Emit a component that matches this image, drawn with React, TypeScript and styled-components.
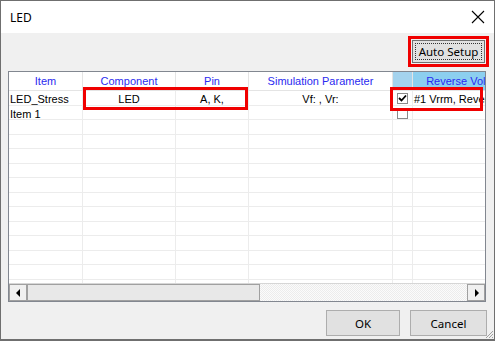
import styled, { createGlobalStyle } from "styled-components";

const GlobalStyle = createGlobalStyle`
  html, body {
    margin: 0;
    padding: 0;
    background: #f0f0f0;
  }
  * {
    box-sizing: border-box;
  }
`;

const COLUMNS = [
  { title: "Item", width: 74, align: "left" },
  { title: "Component", width: 93, align: "center" },
  { title: "Pin", width: 73, align: "center" },
  { title: "Simulation Parameter", width: 144, align: "center" },
  { title: "", width: 20, align: "center", check: true },
  { title: "Reverse Voltage", width: 108, align: "left", accent: true },
];

const ROWS = [
  ["LED_Stress", "LED", "A, K,", "Vf: , Vr:", "checked", "#1 Vrrm, Reverse Voltage"],
  ["Item 1", "", "", "", "empty", ""],
];

const ROW_COUNT = 14;

const App = () => {
  const rows = Array.from({ length: ROW_COUNT }, (_, i) => ROWS[i] ?? ["", "", "", "", "", ""]);

  return (
    <>
      <GlobalStyle />
      <Dialog>
        <TitleBar>
          <Title>LED</Title>
          <CloseIcon width={14} height={14} viewBox="0 0 14 14">
            <path d="M1 1 L13 13 M13 1 L1 13" stroke="#000" strokeWidth="1.1" />
          </CloseIcon>
        </TitleBar>
        <Body>
          <Toolbar>
            <Mark>
              <Button width={73} height={23} focused>
                Auto Setup
              </Button>
            </Mark>
          </Toolbar>
          <Grid>
            <Table>
              <HeaderRow>
                {COLUMNS.map((col, i) => (
                  <HeaderCell key={i} w={col.width} tone={col.accent ? "accent" : col.check ? "check" : "plain"}>
                    {col.title}
                  </HeaderCell>
                ))}
              </HeaderRow>
              {rows.map((row, r) => (
                <Row key={r}>
                  {COLUMNS.map((col, c) => (
                    <Cell key={c} w={col.width} align={col.align}>
                      {col.check ? (
                        row[c] ? <CheckBox>{row[c] === "checked" && <CheckMark />}</CheckBox> : null
                      ) : (
                        row[c]
                      )}
                    </Cell>
                  ))}
                </Row>
              ))}
            </Table>
            <RowMark style={{ left: 74, top: 15, width: 165, height: 23 }} />
            <RowMark style={{ left: 381, top: 15, width: 93, height: 24 }} />
            <ScrollBar>
              <ArrowButton>
                <svg width={5} height={8} viewBox="0 0 5 8">
                  <path d="M4 0 L0 4 L4 8 Z" fill="#000" />
                </svg>
              </ArrowButton>
              <Thumb />
              <Track />
              <ArrowButton>
                <svg width={5} height={8} viewBox="0 0 5 8">
                  <path d="M1 0 L5 4 L1 8 Z" fill="#000" />
                </svg>
              </ArrowButton>
            </ScrollBar>
          </Grid>
          <Footer>
            <Button width={74} height={26}>OK</Button>
            <Button width={77} height={26}>Cancel</Button>
          </Footer>
          <Grip width={10} height={10} viewBox="0 0 10 10">
            <path d="M9 2 L2 9 M9 5 L5 9 M9 8 L8 9" stroke="#a0a0a0" strokeWidth="1" />
          </Grip>
        </Body>
      </Dialog>
    </>
  );
};

const Dialog = styled.div`
  width: 495px;
  height: 341px;
  border: 1px solid #6f6f6f;
  border-bottom-width: 2px;
  display: flex;
  flex-direction: column;
  background: #f0f0f0;
  font-family: "Liberation Sans", Arial, sans-serif;
  overflow: hidden;
`;

const TitleBar = styled.div`
  height: 32px;
  background: #ffffff;
  display: flex;
  align-items: center;
  justify-content: space-between;
  padding: 0 9px 0 9px;
`;

const Title = styled.div`
  font-family: "Noto Sans", "Open Sans", sans-serif;
  font-size: 12px;
  color: #000;
`;

const CloseIcon = styled.svg`
  display: block;
`;

const Body = styled.div`
  flex: 1;
  position: relative;
  display: flex;
  flex-direction: column;
`;

const Toolbar = styled.div`
  display: flex;
  justify-content: flex-end;
  padding: 3px 5px 0 0;
`;

const Mark = styled.div`
  border: 3px solid #f00000;
  padding: 1px;
  display: flex;
`;

const Button = styled.div<{ width: number; height: number; focused?: boolean }>`
  width: ${({ width }) => width}px;
  height: ${({ height }) => height}px;
  background: #e1e1e1;
  border: 1px solid ${({ focused }) => (focused ? "#707070" : "#adadad")};
  display: flex;
  align-items: center;
  justify-content: center;
  font-family: "Noto Sans", "Open Sans", sans-serif;
  font-size: 11.5px;
  color: #000;
  position: relative;
  ${({ focused }) =>
    focused &&
    `
    &::after {
      content: "";
      position: absolute;
      inset: 2px;
      border: 1px dotted #333;
    }
  `}
`;

const Grid = styled.div`
  position: relative;
  margin: 4px 0 0 7px;
  width: 478px;
  height: 231px;
  border: 1px solid #828790;
  background: #ffffff;
  display: flex;
  flex-direction: column;
  overflow: hidden;
`;

const Table = styled.div`
  flex: 1;
  overflow: hidden;
  display: flex;
  flex-direction: column;
`;

const HeaderRow = styled.div`
  display: flex;
  height: 19px;
  flex-shrink: 0;
  border-bottom: 1px solid #e4e4e4;
`;

const toneBg = { plain: "#ffffff", check: "#a4d3ee", accent: "#8ccfef" };

const HeaderCell = styled.div<{ w: number; tone: "plain" | "check" | "accent" }>`
  width: ${({ w }) => w}px;
  flex-shrink: 0;
  background: ${({ tone }) => toneBg[tone]};
  border-right: 1px solid #e4e4e4;
  color: #2a2af0;
  font-size: 11px;
  line-height: 18px;
  text-align: center;
  white-space: nowrap;
  overflow: hidden;
`;

const Row = styled.div`
  display: flex;
  height: 14.5px;
  flex-shrink: 0;
  border-bottom: 1px solid #ececec;
`;

const Cell = styled.div<{ w: number; align: string }>`
  width: ${({ w }) => w}px;
  flex-shrink: 0;
  border-right: 1px solid #ececec;
  font-size: 11px;
  line-height: 14px;
  padding-top: 1px;
  color: #000;
  text-align: ${({ align }) => align};
  padding-left: ${({ align }) => (align === "left" ? "1px" : "0")};
  white-space: nowrap;
  overflow: hidden;
  position: relative;
`;

const CheckBox = styled.div`
  position: absolute;
  left: 4px;
  top: 2px;
  width: 11px;
  height: 11px;
  border: 1px solid #8a8a8a;
  background: #fff;
`;

const CheckMark = () => (
  <svg width={9} height={9} viewBox="0 0 9 9" style={{ display: "block" }}>
    <path d="M1 4 L3.5 6.5 L8 1.5" stroke="#000" strokeWidth="1.8" fill="none" />
  </svg>
);

const RowMark = styled.div`
  position: absolute;
  border: 3px solid #f00000;
  pointer-events: none;
`;

const ScrollBar = styled.div`
  height: 18px;
  flex-shrink: 0;
  display: flex;
  border-top: 1px solid #d6d6d6;
  background: #f0f0f0;
`;

const ArrowButton = styled.div`
  width: 18px;
  height: 17px;
  border: 1px solid #a0a0a0;
  background: #f0f0f0;
  display: flex;
  align-items: center;
  justify-content: center;
  flex-shrink: 0;
`;

const Thumb = styled.div`
  width: 233px;
  height: 17px;
  border: 1px solid #a0a0a0;
  background: #e8e8e8;
  flex-shrink: 0;
`;

const Track = styled.div`
  flex: 1;
  background-color: #f4f4f4;
  background-image: repeating-conic-gradient(#fbfbfb 0 25%, #ececec 0 50%);
  background-size: 2px 2px;
`;

const Footer = styled.div`
  display: flex;
  justify-content: flex-end;
  gap: 10px;
  padding: 8px 7px 0 0;
`;

const Grip = styled.svg`
  position: absolute;
  right: 0;
  bottom: 0;
`;

export default App;
